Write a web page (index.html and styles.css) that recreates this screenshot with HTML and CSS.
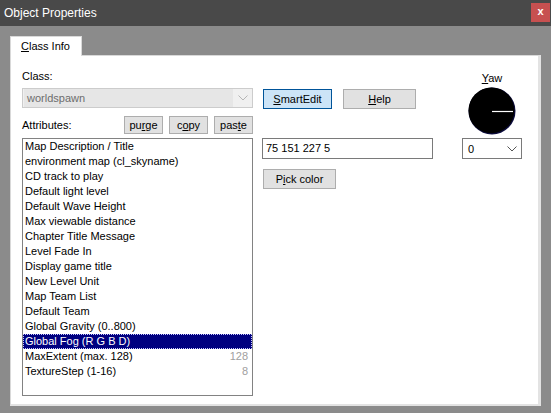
FILE: index.html
```html
<!DOCTYPE html>
<html>
<head>
<meta charset="utf-8">
<link rel="stylesheet" href="styles.css">
</head>
<body>
<div class="window">
  <div class="titlebar">
    <span class="title">Object Properties</span>
    <span class="close">x</span>
  </div>
  <div class="client">
    <div class="tabs">
      <div class="tab"><u>C</u>lass Info</div>
    </div>
    <div class="panel">
      <div class="col-left">
        <div class="label">Class:</div>
        <div class="combo disabled">
          <span class="combo-text">worldspawn</span>
          <span class="combo-arrow">
            <svg width="10" height="6" viewBox="0 0 10 6"><path d="M0.5 0.5 L5 5 L9.5 0.5" fill="none" stroke="#b5b5b5" stroke-width="1"/></svg>
          </span>
        </div>
        <div class="attr-row">
          <span class="label">Attributes:</span>
          <div class="btns">
            <span class="btn small">pu<u>r</u>ge</span>
            <span class="btn small">c<u>o</u>py</span>
            <span class="btn small">pas<u>t</u>e</span>
          </div>
        </div>
        <div class="listbox">
          <div class="item">Map Description / Title</div>
          <div class="item">environment map (cl_skyname)</div>
          <div class="item">CD track to play</div>
          <div class="item">Default light level</div>
          <div class="item">Default Wave Height</div>
          <div class="item">Max viewable distance</div>
          <div class="item">Chapter Title Message</div>
          <div class="item">Level Fade In</div>
          <div class="item">Display game title</div>
          <div class="item">New Level Unit</div>
          <div class="item">Map Team List</div>
          <div class="item">Default Team</div>
          <div class="item">Global Gravity (0..800)</div>
          <div class="item selected">Global Fog (R G B D)</div>
          <div class="item">MaxExtent (max. 128)<span class="val">128</span></div>
          <div class="item">TextureStep (1-16)<span class="val">8</span></div>
        </div>
      </div>
      <div class="col-mid">
        <div class="btn-row">
          <span class="btn default"><u>S</u>martEdit</span>
          <span class="btn help"><u>H</u>elp</span>
        </div>
        <div class="edit">75 151 227 5</div>
        <span class="btn pick">P<u>i</u>ck color</span>
      </div>
      <div class="col-right">
        <div class="yaw-label"><u>Y</u>aw</div>
        <svg class="dial" width="48" height="48" viewBox="0 0 48 48">
          <circle cx="24" cy="24" r="23.5" fill="#0b0b3a"/>
          <circle cx="23.4" cy="23.4" r="22.9" fill="#000"/>
          <line x1="24" y1="24.5" x2="45" y2="24.5" stroke="#fff" stroke-width="1.2"/>
        </svg>
        <div class="combo yaw-combo">
          <span class="combo-text">0</span>
          <span class="combo-arrow">
            <svg width="10" height="6" viewBox="0 0 10 6"><path d="M0.5 0.5 L5 5 L9.5 0.5" fill="none" stroke="#555" stroke-width="1"/></svg>
          </span>
        </div>
      </div>
    </div>
  </div>
</div>
</body>
</html>
```

FILE: styles.css
```css
* { box-sizing: border-box; }
html, body { margin: 0; padding: 0; }
body {
  width: 551px;
  height: 413px;
  overflow: hidden;
  background: #8b8b8b;
  font-family: "Liberation Sans", Arial, sans-serif;
  font-size: 11px;
  color: #000;
}
u { text-decoration: underline; text-underline-offset: 1px; }
.window { width: 551px; height: 413px; display: flex; flex-direction: column; }
.titlebar {
  height: 26px;
  background: #494949;
  display: flex;
  align-items: center;
  justify-content: space-between;
  padding: 0 1px 0 4px;
}
.title { color: #fff; font-size: 12px; }
.close {
  width: 19px;
  height: 19px;
  margin-top: -1px;
  background: #c75050;
  color: #fff;
  font-weight: bold;
  font-size: 11px;
  display: flex;
  align-items: center;
  justify-content: center;
  line-height: 1;
  padding-bottom: 2px;
}
.client { flex: 1; padding: 10px 10px 7px 10px; display: flex; flex-direction: column; }
.tabs { display: flex; height: 19px; }
.tab {
  width: 72px;
  height: 20px;
  background: #fff;
  border: 1px solid #d9d9d9;
  border-bottom: none;
  padding: 3px 0 0 10px;
  position: relative;
  z-index: 1;
}
.panel {
  flex: 1;
  width: 531px;
  background: #fff;
  border: 1px solid #d9d9d9;
  border-right: 3px solid #e3e3e3;
  border-bottom: 2px solid #e3e3e3;
  display: flex;
  padding: 13px 0 0 11px;
}
.col-left { width: 231px; display: flex; flex-direction: column; }
.label { height: 14px; line-height: 14px; }
.combo {
  height: 20px;
  border: 1px solid #cccccc;
  display: flex;
  align-items: center;
  justify-content: space-between;
  background: #fff;
}
.combo.disabled { margin-top: 5px; background: #f0f0f0; }
.combo.disabled .combo-text {
  flex: 1;
  height: 18px;
  line-height: 18px;
  margin: 0 0 0 1px;
  padding-left: 3px;
  background: #e6e6e6;
  color: #6d6d6d;
}
.combo-arrow { width: 19px; display: flex; justify-content: center; }
.attr-row {
  margin-top: 8px;
  height: 18px;
  display: flex;
  align-items: center;
  justify-content: space-between;
}
.btns { display: flex; gap: 6px; }
.btn {
  display: inline-flex;
  align-items: center;
  justify-content: center;
  background: #e1e1e1;
  border: 1px solid #adadad;
  height: 20px;
}
.btn.small { width: 39px; height: 18px; }
.listbox {
  margin-top: 4px;
  height: 258px;
  border: 1px solid #828282;
  padding-top: 0;
}
.item {
  height: 15px;
  line-height: 15px;
  padding: 0 4px 0 2px;
  display: flex;
  justify-content: space-between;
  white-space: nowrap;
}
.item.selected {
  background: #000080;
  color: #fff;
  outline: 1px dotted #c8c8ff;
  outline-offset: -1px;
}
.val { color: #a0a0a0; }
.col-mid {
  margin-left: 9px;
  width: 171px;
  display: flex;
  flex-direction: column;
  align-items: flex-start;
  padding-top: 20px;
}
.btn-row { display: flex; gap: 11px; margin-left: 1px; }
.btn.default { width: 69px; background: #cce4f7; border-color: #005499; }
.btn.help { width: 73px; }
.edit {
  margin-top: 29px;
  width: 171px;
  height: 21px;
  border: 1px solid #7a7a7a;
  line-height: 19px;
  padding-left: 3px;
}
.btn.pick { margin-top: 10px; margin-left: 1px; width: 73px; }
.col-right {
  margin-left: 29px;
  width: 60px;
  display: flex;
  flex-direction: column;
  align-items: center;
  padding-top: 2px;
}
.yaw-label { height: 14px; line-height: 14px; }
.dial { margin-top: 2px; display: block; }
.yaw-combo {
  margin-top: 3px;
  width: 60px;
  height: 21px;
  border-color: #7a7a7a;
}
.yaw-combo .combo-text { padding-left: 5px; }
```
